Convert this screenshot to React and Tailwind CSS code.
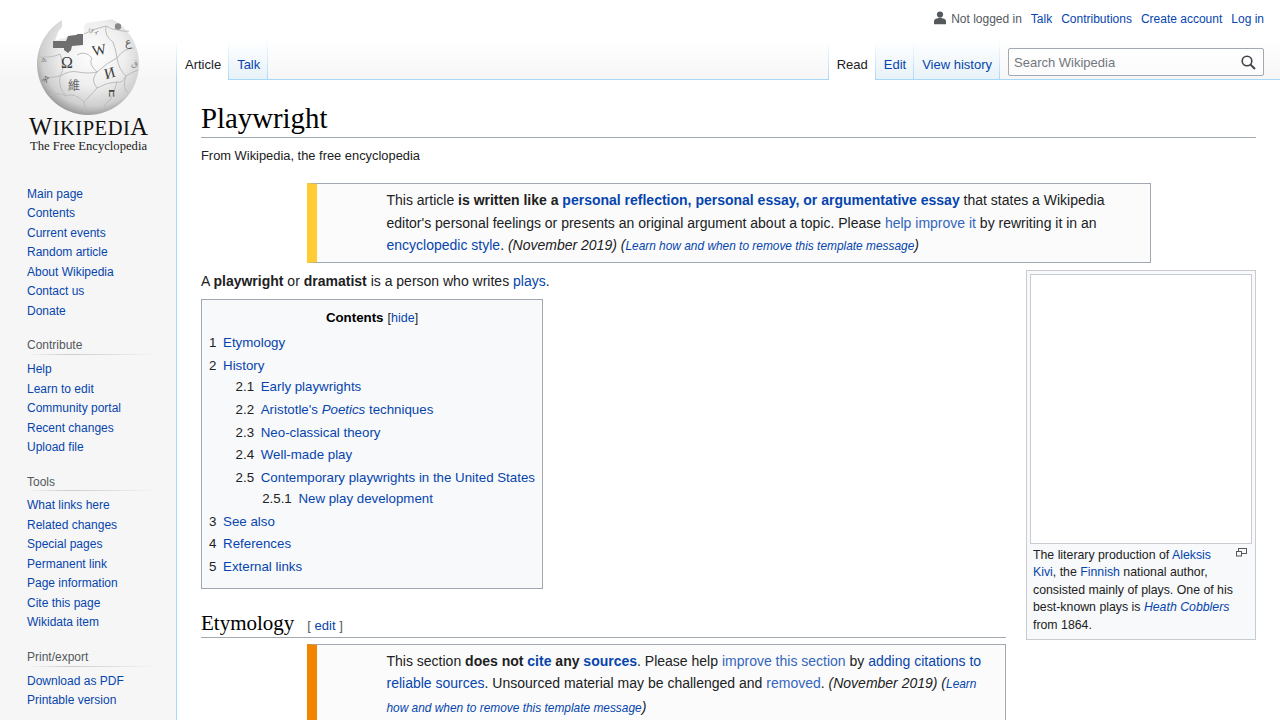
const SANS = "font-['Liberation_Sans',Arial,sans-serif]";

function A({ children, ext, className = "" }) {
  return <a href="#" onClick={(e) => e.preventDefault()} className={(ext ? "text-[#3366bb] " : "text-[#0645ad] ") + className}>{children}</a>;
}

function Globe() {
  const serif = "'Liberation Serif', serif";
  return (
    <svg width="160" height="160" viewBox="0 0 160 160" className="block" role="img" aria-label="Wikipedia">
      <defs>
        <radialGradient id="g" cx="0.55" cy="0.4" r="0.64">
          <stop offset="0" stopColor="#ffffff" />
          <stop offset="0.5" stopColor="#eeeeee" />
          <stop offset="0.8" stopColor="#cfcfcf" />
          <stop offset="1" stopColor="#8a8a8a" />
        </radialGradient>
      </defs>
      <circle cx="88" cy="64" r="51" fill="url(#g)" />
      <path d="M62 5 H114 V19 L87 23 L84 26 L84 33 L72 35 L55 41 L58 32 L62 27 Z" fill="#ffffff" />
      <path d="M53 41 L66 41 L68 36 L76 35 L78 34 L83 34 L83 45 L72 46 L71 50 L68 53 L64 50 L64 48 L53 48 Z" fill="#6e6e6e" />
      <g fill="none" stroke="#bcbcbc" strokeWidth="1">
        <path d="M84 34 Q93 29 106 26 Q112 30 118 30 Q124 32 129 31" />
        <path d="M77 55 Q85 50 92 58 Q88 64 97 72 Q90 80 97 88 Q92 94 84 102" />
        <path d="M97 72 Q108 62 117 58 Q124 48 134 48" />
        <path d="M106 26 Q104 36 113 42 Q116 50 117 58 Q119 70 126 76 Q122 88 128 93" />
        <path d="M97 88 Q108 82 117 82 Q122 84 126 76 Q132 72 138 70" />
        <path d="M39 57 Q52 58 60 54 Q66 68 60 76 Q50 78 41 78" />
        <path d="M60 76 Q70 70 78 72 Q90 74 97 72" />
        <path d="M60 76 Q58 88 66 96 Q74 92 84 102 Q86 108 84 112" />
        <path d="M50 95 Q58 92 66 96" />
        <path d="M117 82 Q114 94 110 100 Q104 104 104 108" />
      </g>
      <g fontFamily={serif} fill="#3c3c3c">
        <text x="61" y="68" fontSize="16">Ω</text>
        <text x="92" y="55" fontSize="15" transform="rotate(-12 99 50)">W</text>
        <text x="104" y="78" fontSize="15" transform="rotate(-15 110 72)">И</text>
        <text x="108" y="97" fontSize="12" fill="#444" fontWeight="bold">ח</text>
      </g>
      <text x="68" y="90" fontSize="12" fill="#666" fontFamily="'Noto Sans CJK TC', sans-serif">維</text>
      <text x="88" y="33" fontSize="6" fill="#666" fontFamily="'Noto Sans CJK JP', sans-serif" transform="rotate(12 90 30)">ワィ</text>
      <text x="125" y="46" fontSize="11" fill="#555" fontFamily="'DejaVu Sans', sans-serif">ع</text>
      <text x="41" y="62" fontSize="9" fill="#777" fontFamily="'DejaVu Sans', sans-serif">க</text>
      <text x="131" y="66" fontSize="9" fill="#888" fontFamily="'DejaVu Sans', sans-serif">ق</text>
      <text x="42" y="82" fontSize="8" fill="#777" fontFamily="'DejaVu Sans', sans-serif" transform="rotate(30 45 80)">Ѫ</text>
      <circle cx="118" cy="26.5" r="3.2" fill="#888" />
      <text x="29" y="135" fontFamily={serif} fill="#111" fontSize="20.5" textLength="119" lengthAdjust="spacing">
        <tspan fontSize="24.5">W</tspan>IKIPEDI<tspan fontSize="24.5">A</tspan>
      </text>
      <text x="30" y="149.5" fontFamily={serif} fill="#222" fontSize="13.5" textLength="117" lengthAdjust="spacingAndGlyphs">The Free Encyclopedia</text>
    </svg>
  );
}

function Portal({ title, items, lead }) {
  return (
    <div className="mt-[15.75px]">
      <div className={"h-[18px] text-[12px] text-[#54595d] relative " + lead}>
        {title}
        <div className="absolute left-0 right-[-5px] bottom-0 h-px bg-linear-to-r from-transparent via-[#c8ccd1] via-33% to-transparent" />
      </div>
      <ul className="mt-[5px]">
        {items.map((t) => (
          <li key={t} className="text-[12px] leading-[19.5px]"><A>{t}</A></li>
        ))}
      </ul>
    </div>
  );
}

function Sidebar() {
  return (
    <aside className="w-[176px] shrink-0">
      <div className="h-[160px]"><Globe /></div>
      <div className="pl-[27px] w-[152px]">
        <ul className="mt-[24.75px]">
          {["Main page", "Contents", "Current events", "Random article", "About Wikipedia", "Contact us", "Donate"].map((t) => (
            <li key={t} className="text-[12px] leading-[19.5px]"><A>{t}</A></li>
          ))}
        </ul>
        <Portal lead="leading-[17px]" title="Contribute" items={["Help", "Learn to edit", "Community portal", "Recent changes", "Upload file"]} />
        <Portal lead="leading-[19px]" title="Tools" items={["What links here", "Related changes", "Special pages", "Permanent link", "Page information", "Cite this page", "Wikidata item"]} />
        <Portal lead="leading-[17px]" title="Print/export" items={["Download as PDF", "Printable version"]} />
      </div>
    </aside>
  );
}

function Sep() {
  return <div className="w-px h-10 bg-linear-to-b from-white to-[#a7d7f9]" />;
}

function Tab({ children, selected }) {
  return selected ? (
    <div className="h-10 pt-[15px] pl-2 pr-[7px] bg-white text-[13px] leading-[20px] text-[#202122]">{children}</div>
  ) : (
    <div className="h-10 pt-[15px] pl-2 pr-[7px] bg-linear-to-b from-white to-[#e8f2f8] border-b border-[#a7d7f9] text-[13px] leading-[20px] text-[#0645ad]">{children}</div>
  );
}

function Header() {
  return (
    <header className="h-20 relative border-b border-[#a7d7f9] flex flex-col">
      <div className="h-10 flex justify-end items-start pt-[10px] pr-4 text-[12px] leading-[18px]">
        <svg width="12" height="14" viewBox="0 0 12 14" className="mt-[1px] mr-[5px]" fill="#54595d">
          <circle cx="6" cy="3.6" r="3.1" />
          <path d="M0 13.2 V10.2 C0 8 3 7 6 7 C9 7 12 8 12 10.2 V13.2 Z" />
        </svg>
        <span className="text-[#54595d]">Not logged in</span>
        <A className="ml-[9px]">Talk</A>
        <A className="ml-[9px]">Contributions</A>
        <A className="ml-[9px]">Create account</A>
        <A className="ml-[9px]">Log in</A>
      </div>
      <div className="h-10 flex -mb-px">
        <Sep />
        <Tab selected>Article</Tab>
        <Sep />
        <Tab>Talk</Tab>
        <Sep />
        <div className="flex-1" />
        <Sep />
        <Tab selected>Read</Tab>
        <Sep />
        <Tab>Edit</Tab>
        <Sep />
        <Tab>View history</Tab>
        <Sep />
        <div className="ml-2 mr-4 mt-2 w-[256px] h-7 box-border border border-[#a2a9b1] rounded-[2px] bg-white/50 flex items-center justify-between pl-[5px] pr-[7px]">
          <span className="text-[13px] leading-[20px] text-[#72777d] mt-[1px]">Search Wikipedia</span>
          <svg width="15" height="15" viewBox="0 0 15 15" fill="none" stroke="#404244">
            <circle cx="6" cy="6" r="4.8" strokeWidth="1.6" />
            <path d="M9.6 9.6 L14 14" strokeWidth="2" />
          </svg>
        </div>
      </div>
    </header>
  );
}

function TocRow({ n, children, sub }) {
  return (
    <li className="mb-[1.33px]">
      <div className="flex">
        <span className="pr-[6.65px] text-[#202122]">{n}</span>
        <A>{children}</A>
      </div>
      {sub && <ul className="ml-[26.6px] mt-0">{sub}</ul>}
    </li>
  );
}

function Toc() {
  return (
    <div className="w-[342px] h-[290px] box-border border border-[#a2a9b1] bg-[#f8f9fa] p-[7px] text-[13.3px] leading-[21.28px]">
      <div className="text-center mb-[2.8px]">
        <b className="text-black">Contents</b>
        <span className="ml-1 text-[12.5px]">[<A>hide</A>]</span>
      </div>
      <ul>
        <TocRow n="1">Etymology</TocRow>
        <TocRow n="2" sub={<>
          <TocRow n="2.1">Early playwrights</TocRow>
          <TocRow n="2.2"><span>Aristotle's <i>Poetics</i> techniques</span></TocRow>
          <TocRow n="2.3">Neo-classical theory</TocRow>
          <TocRow n="2.4">Well-made play</TocRow>
          <TocRow n="2.5" sub={<TocRow n="2.5.1">New play development</TocRow>}>Contemporary playwrights in the United States</TocRow>
        </>}>History</TocRow>
        <TocRow n="3">See also</TocRow>
        <TocRow n="4">References</TocRow>
        <TocRow n="5">External links</TocRow>
      </ul>
    </div>
  );
}

function Thumb() {
  return (
    <div className="float-right w-[230px] h-[370px] ml-5 mb-2 box-border border border-[#c8ccd1] bg-[#f8f9fa] p-[3px]">
      <div className="h-[270px] box-border border border-[#c8ccd1] bg-white" />
      <div className="px-[3px] pt-[3px] text-[12.32px] leading-[17.4px] text-[#202122]">
        <svg width="11" height="9" viewBox="0 0 11 9" fill="none" stroke="#54595d" className="float-right mt-[1px] mr-[2px] ml-[7px]">
          <rect x="2.5" y="0.5" width="8" height="5" />
          <rect x="0.5" y="3.5" width="5" height="4.5" fill="#f8f9fa" />
        </svg>
        The literary production of <A>Aleksis Kivi</A>, the <A>Finnish</A> national author, consisted mainly of plays. One of his best-known plays is <A className="italic">Heath Cobblers</A> from 1864.
      </div>
    </div>
  );
}

function Content() {
  return (
    <main className="h-[640px] bg-white border-l border-[#a7d7f9] pl-6 pr-6 pt-5 text-[14px] leading-[22.4px] text-[#202122]">
      <h1 className="font-['Liberation_Serif',serif] text-[28.8px] leading-[37.44px] text-black border-b border-[#a2a9b1] h-[38px] box-border">Playwright</h1>
      <div className="text-[12.88px] leading-[20px] mt-[8px] h-[37px]">From Wikipedia, the free encyclopedia</div>
      <div className="h-[80px] box-border mx-[105.5px] border border-[#a2a9b1] border-l-[10px] border-l-[#ffcc33] bg-[#fbfbfb] pl-[70px] pr-[9px] pt-[5.4px]">
        This article <b>is written like a <A>personal reflection, personal essay, or argumentative essay</A></b> that states a Wikipedia editor's personal feelings or presents an original argument about a topic. Please <A ext>help improve it</A> by rewriting it in an <A>encyclopedic style</A>. <i>(November 2019)</i> <i>(<A className="text-[11.9px]">Learn how and when to remove this template message</A>)</i>
      </div>
      <div className="mt-[7px]">
        <Thumb />
        <p className="mb-[7px]">A <b>playwright</b> or <b>dramatist</b> is a person who writes <A>plays</A>.</p>
        <Toc />
        <h2 className="mt-[20px] h-[29px] box-border overflow-hidden border-b border-[#a2a9b1] font-['Liberation_Serif',serif] text-[21px] leading-[29px] text-black">
          Etymology
          <span className={"ml-[13px] text-[13px] text-[#54595d] " + SANS}>[ <A>edit</A> ]</span>
        </h2>
        <div className="mt-[6px] ml-[105.5px] overflow-hidden box-border border border-[#a2a9b1] border-l-[10px] border-l-[#f28500] bg-[#fbfbfb] pl-[70px] pr-[9px] pt-[4.5px] pb-[5px]">
          This section <b>does not <A>cite</A> any <A>sources</A></b>. Please help <A ext>improve this section</A> by <A>adding citations to reliable sources</A>. Unsourced material may be challenged and <A ext>removed</A>. <i>(November 2019)</i> <i>(<A className="text-[11.9px]">Learn how and when to remove this template message</A>)</i>
        </div>
      </div>
    </main>
  );
}

export default function App() {
  return (
    <div className={"h-[720px] overflow-hidden flex bg-[#f6f6f6] bg-[linear-gradient(#ffffff_40px,#f6f6f6_80px)] " + SANS}>
      <Sidebar />
      <div className="flex-1 min-w-0">
        <Header />
        <Content />
      </div>
    </div>
  );
}
